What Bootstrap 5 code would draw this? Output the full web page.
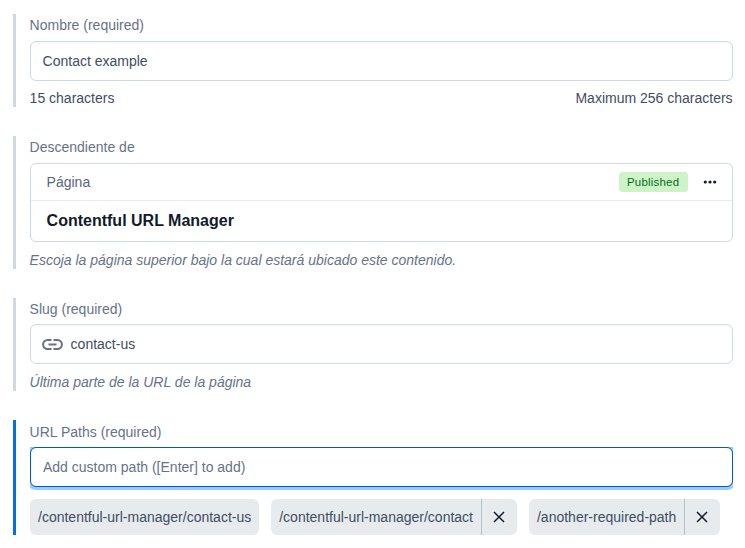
<!DOCTYPE html>
<html lang="es">
<head>
<meta charset="utf-8">
<meta name="viewport" content="width=device-width, initial-scale=1">
<title>Entry editor</title>
<link href="https://cdn.jsdelivr.net/npm/bootstrap@5.3.0/dist/css/bootstrap.min.css" rel="stylesheet">
<style>
body { font-family: "Liberation Sans", Arial, sans-serif; font-size: 14px; line-height: 20px; color: #414d63; background: #fff; }
.editor { padding: 14px 12.4px 0 13px; gap: 29px; }
.field { border-left: 3px solid #cfd9e0; padding-left: 13.6px; }
.field .form-label { color: #67728a; margin: 1px 0 6px; display: block; }
.field-slug .form-label { margin-bottom: 5px; }
.field .form-control { height: 40px; border: 1px solid #cfd9e0; border-radius: 6px; padding: 9px 12px; font-size: 14px; line-height: 20px; color: #414d63; box-shadow: inset 0 2px 0 rgba(225,228,232,.2); }
.field .form-control::placeholder { color: #67728a; opacity: 1; }
.field-active { border-left-color: #036fe3; padding-left: 14px; margin-right: -.4px; }
.field-active .form-label { margin: 2px 0 5px -.4px; }
.field-active .form-control { border-color: #0059c8; box-shadow: 0 0 0 3px #98cbff; clip-path: inset(0 0 -3px 0); }
.slug-icon { left: 12.4px; top: 10px; color: #67728a; }
.field .slug-input { padding-left: 40px; }
.counter { padding-top: 7px; height: 26px; }
.hint { color: #67728a; font-style: italic; padding-top: 8px; height: 27px; }
.entry { border: 1px solid #cfd9e0; border-radius: 6px; height: 79px; }
.entry-head { height: 37px; border-bottom: 1px solid #e7ebee; padding: 0 15px 0 16px; color: #5a657c; }
.entry-title { font-size: 16px; line-height: 24px; font-weight: 700; color: #111b2b; padding: 8px 16px; margin: 0; }
.status { background: #cdf3c6; color: #006d23; font-size: 11.45px; letter-spacing: .23px; line-height: 20px; border-radius: 4px; width: 69px; text-align: center; margin-right: 15px; }
.paths { gap: 12px; margin-top: 12px; }
.pill { background: #e7ebee; border-radius: 6px; height: 36px; }
.pill-text { padding: 0 8px; }
.pill-remove { width: 36px; border: 0; border-left: 1px solid #aec1cc; background: none; color: #111b2b; padding: 0 1px 0 0; }
</style>
<script src="https://cdn.jsdelivr.net/npm/bootstrap@5.3.0/dist/js/bootstrap.bundle.min.js"></script>
</head>
<body>
<main class="editor d-flex flex-column">
  <section class="field">
    <label class="form-label" for="nombre">Nombre (required)</label>
    <input class="form-control" id="nombre" type="text" value="Contact example">
    <div class="counter d-flex justify-content-between"><span>15 characters</span><span>Maximum 256 characters</span></div>
  </section>

  <section class="field">
    <span class="form-label">Descendiente de</span>
    <article class="entry">
      <div class="entry-head d-flex align-items-center">
        <span class="me-auto">Página</span>
        <span class="status">Published</span>
        <svg width="14" height="14" viewBox="0 0 14 14" fill="#111b2b" aria-hidden="true"><circle cx="2.3" cy="7" r="1.6"/><circle cx="7" cy="7" r="1.6"/><circle cx="11.7" cy="7" r="1.6"/></svg>
      </div>
      <h2 class="entry-title">Contentful URL Manager</h2>
    </article>
    <div class="hint">Escoja la página superior bajo la cual estará ubicado este contenido.</div>
  </section>

  <section class="field field-slug">
    <label class="form-label" for="slug">Slug (required)</label>
    <div class="position-relative">
      <svg class="slug-icon position-absolute" width="21" height="21" viewBox="0 0 21 21" fill="none" stroke="currentColor" stroke-width="2" aria-hidden="true"><path d="M9.5 6H5.6a4.5 4.5 0 0 0 0 9H9.5M11.5 6h3.9a4.5 4.5 0 0 1 0 9H11.5M6.5 10.5h8"/></svg>
      <input class="form-control slug-input" id="slug" type="text" value="contact-us">
    </div>
    <div class="hint">Última parte de la URL de la página</div>
  </section>

  <section class="field field-active">
    <label class="form-label" for="paths">URL Paths (required)</label>
    <input class="form-control" id="paths" type="text" placeholder="Add custom path ([Enter] to add)">
    <div class="paths d-flex">
      <div class="pill d-flex align-items-center"><span class="pill-text">/contentful-url-manager/contact-us</span></div>
      <div class="pill d-flex align-items-center"><span class="pill-text">/contentful-url-manager/contact</span>
        <button class="pill-remove h-100 d-flex align-items-center justify-content-center" type="button" aria-label="Remove"><svg width="12" height="12" viewBox="0 0 12 12" stroke="currentColor" stroke-width="1.5" aria-hidden="true"><path d="M1 1l10 10M11 1L1 11"/></svg></button></div>
      <div class="pill d-flex align-items-center"><span class="pill-text">/another-required-path</span>
        <button class="pill-remove h-100 d-flex align-items-center justify-content-center" type="button" aria-label="Remove"><svg width="12" height="12" viewBox="0 0 12 12" stroke="currentColor" stroke-width="1.5" aria-hidden="true"><path d="M1 1l10 10M11 1L1 11"/></svg></button></div>
    </div>
  </section>
</main>
</body>
</html>
